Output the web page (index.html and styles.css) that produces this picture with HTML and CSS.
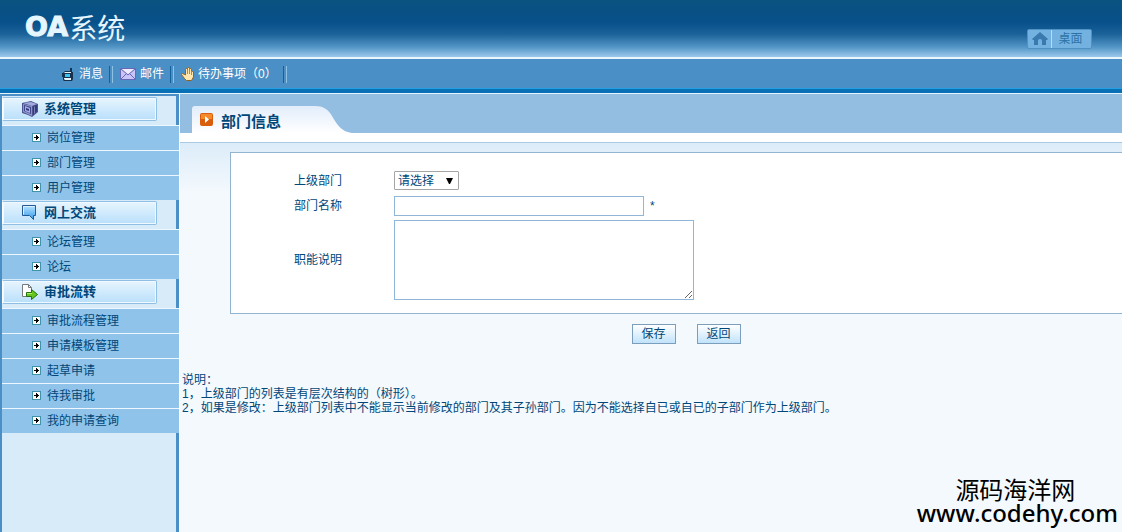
FILE: index.html
```html
<!DOCTYPE html>
<html lang="zh-CN">
<head>
    <meta charset="UTF-8">
    <title>OA系统 - 部门信息</title>
    <link rel="stylesheet" href="styles.css">
</head>

<body>
    <!-- 公用图标 -->
    <svg class="defs" width="0" height="0">
        <symbol id="arrow" viewBox="0 0 9 9">
            <path fill="#3f93ad" d="M0 0h9v9H0z"/>
            <path fill="#fff" d="M1 1h7v7H1z"/>
            <path fill="#000" d="M2 4h5v1H2zM4 2h1v1h1v1H4zM4 5h2v1H5v1H4z"/>
        </symbol>
    </svg>

    <!-- 头部 -->
    <header class="top">
        <h1 class="logo"><b>OA</b>系统</h1>
        <a class="desktop" href="#">
            <svg width="16" height="14" viewBox="0 0 16 14"><path fill="#3979ad" d="M8 0l8 7-1 1h-1v5h-4V9a2 2 0 0 0-4 0v4H2V8H1L0 7z"/></svg>
            <span>桌面</span>
        </a>
    </header>

    <!-- 工具栏 -->
    <nav class="bar">
        <a href="#">
            <svg width="11" height="13" viewBox="0 0 11 13"><path fill="#17324d" d="M8 0h2v4h1v7l-1 2H2l-1-1V9H0V5h1l2-2h5z"/><path fill="#e8f4fb" d="M2 5l1-1h6v8H3L2 11z"/><path fill="#17324d" d="M2 5h7v5H2z"/><path fill="#39c4f4" d="M3 6h5v3H3z"/></svg>
            消息
        </a>
        <a href="#">
            <svg width="16" height="12" viewBox="0 0 16 12"><path fill="#6768b5" d="M1 0h14l1 1v10l-1 1H1l-1-1V1z"/><path fill="#c9c5fb" d="M1 1h14v10H1z"/><path fill="#eeeaff" d="M2 1h12L8 6z"/><path fill="none" stroke="#6768b5" d="M1 1l7 6 7-6M1 11l5-5M15 11l-5-5"/></svg>
            邮件
        </a>
        <a href="#">
            <svg width="13" height="14" viewBox="0 0 13 14"><path fill="#ffe6ae" stroke="#8d6328" d="M4.500 8V2.500l1-1 1 1v-1l1-1 1 1v1l1-1 1 1V5l1-1 1 1v5l-2 3.500h-5l-2-2-3-4 1-1 2 1z"/><path fill="none" stroke="#b98741" d="M6.500 3v4M8.500 3v4M10.500 4v4"/></svg>
            待办事项（0）
        </a>
    </nav>

    <div class="wrap">
        <!-- 左侧菜单 -->
        <aside class="side">
            <h2><span>
                <svg width="16" height="16" viewBox="0 0 16 16"><path fill="#4d538f" d="M0 2l9-2 7 3v8l-6 5-4-2-6-2z"/><path fill="#a2a9dc" d="M1 2l8-1 6 2-5 2z"/><path fill="#8e96cf" d="M1 3l9 2v10l-9-4z"/><path fill="#424887" d="M2 4l7 2v7l-7-3z"/><path fill="#a5aceb" d="M3 5l5 2v5L3 10z"/><path fill="#343b79" d="M4 7l3 1v2L4 9zM11 5l4-1v6l-4 4z"/><path fill="#777eb8" d="M12 6l1-1v7l-1 1z"/></svg>
                系统管理</span></h2>
            <ul>
                <li><a href="#"><svg width="9" height="9"><use href="#arrow"/></svg>岗位管理</a></li>
                <li><a href="#"><svg width="9" height="9"><use href="#arrow"/></svg>部门管理</a></li>
                <li><a href="#"><svg width="9" height="9"><use href="#arrow"/></svg>用户管理</a></li>
            </ul>
            <h2><span>
                <svg width="16" height="16" viewBox="0 0 16 16"><defs><linearGradient id="talk" x2="0" y2="1"><stop stop-color="#b8e3ff"/><stop offset="1" stop-color="#329bea"/></linearGradient></defs><path fill="url(#talk)" stroke="#245994" d="M.500.5h13v10h-2v4l-4-4h-7z"/><path fill="none" stroke="#d8f0ff" d="M1.500 9.500v-8h11"/></svg>
                网上交流</span></h2>
            <ul>
                <li><a href="#"><svg width="9" height="9"><use href="#arrow"/></svg>论坛管理</a></li>
                <li><a href="#"><svg width="9" height="9"><use href="#arrow"/></svg>论坛</a></li>
            </ul>
            <h2><span>
                <svg width="16" height="16" viewBox="0 0 16 16"><path fill="#fff" stroke="#777b80" d="M.5.500h6l3 3v9h-9z"/><path fill="none" stroke="#777b80" d="M6.500.5v3h3"/><path fill="#66c51f" stroke="#23720d" d="M4.500 8.500h5v-3l6 5-6 5v-3h-5z"/><path stroke="#b1ed66" d="M5 9.500h5"/></svg>
                审批流转</span></h2>
            <ul>
                <li><a href="#"><svg width="9" height="9"><use href="#arrow"/></svg>审批流程管理</a></li>
                <li><a href="#"><svg width="9" height="9"><use href="#arrow"/></svg>申请模板管理</a></li>
                <li><a href="#"><svg width="9" height="9"><use href="#arrow"/></svg>起草申请</a></li>
                <li><a href="#"><svg width="9" height="9"><use href="#arrow"/></svg>待我审批</a></li>
                <li><a href="#"><svg width="9" height="9"><use href="#arrow"/></svg>我的申请查询</a></li>
            </ul>
        </aside>

        <!-- 右侧内容 -->
        <main class="main">
            <div class="title">
                <h2>
                    <svg width="13" height="13" viewBox="0 0 13 13"><rect width="13" height="13" rx="2" fill="#d85d0c"/><path fill="#f58a2b" d="M1 1h11v5H1z"/><path fill="#fff" d="M5 3l4 3.500L5 10z"/></svg>
                    <span>部门信息</span>
                </h2>
                <svg class="curve" width="40" height="27" viewBox="0 0 40 27"><defs><linearGradient id="tab" x2="0" y2="1"><stop stop-color="#e2edfb"/><stop offset="1" stop-color="#fff"/></linearGradient></defs><path fill="url(#tab)" d="M0 0h3c8 0 13 3 17 10 5 9 10 16 20 17H0z"/></svg>
            </div>

            <form class="content">
                <div class="panel">
                    <div class="row">
                        <label for="parent">上级部门</label>
                        <select id="parent"><option>请选择</option></select>
                    </div>
                    <div class="row">
                        <label for="name">部门名称</label>
                        <input id="name" type="text"><span class="must">*</span>
                    </div>
                    <div class="row row-area">
                        <label for="desc">职能说明</label>
                        <textarea id="desc"></textarea>
                    </div>
                </div>
                <div class="btns">
                    <button type="submit">保存</button>
                    <button type="button">返回</button>
                </div>
            </form>

            <div class="notes">
                <p>说明：</p>
                <p>1，上级部门的列表是有层次结构的（树形）。</p>
                <p>2，如果是修改：上级部门列表中不能显示当前修改的部门及其子孙部门。因为不能选择自已或自已的子部门作为上级部门。</p>
            </div>
        </main>
    </div>

    <!-- 水印 -->
    <div class="mark">
        <p>源码海洋网</p>
        <p class="url">www.codehy.com</p>
    </div>
</body>
</html>
```
FILE: styles.css
```css
* {
    box-sizing: border-box;
}

body,
ul,
h1,
h2,
p {
    margin: 0;
    padding: 0;
}

body {
    display: flex;
    flex-direction: column;
    min-height: 100vh;
    font: 12px/14px "Liberation Sans", "Noto Sans CJK SC", sans-serif;
    color: #004779;
    background: #f4f9fd;
}

a {
    color: inherit;
    text-decoration: none;
}

svg {
    flex: none;
}

.defs {
    position: absolute;
}

/* 头部 */
.top {
    display: flex;
    justify-content: space-between;
    align-items: flex-start;
    height: 59px;
    padding: 0 30px 0 25px;
    border-bottom: 2px solid #e9f6fc;
    background: linear-gradient(#0a527f 0, #07508a 22px, #1b6299 34px, #5295c6 47px, #9bc8eb 57px);
}

.logo {
    display: flex;
    align-items: center;
    gap: 1px;
    height: 54px;
    font: 400 28px/54px "Noto Sans CJK SC", sans-serif;
    color: #e6f6ff;
}

.logo b {
    font: 900 27px/54px "DejaVu Sans", sans-serif;
    -webkit-text-stroke: 1px #e6f6ff;
}

.desktop {
    display: flex;
    align-items: center;
    width: 65px;
    height: 20px;
    margin-top: 29px;
    border: 1px solid #4f91c3;
    border-radius: 2px;
    background: #73b2e0;
    color: #2d72a7;
}

.desktop svg {
    margin: 0 3px 0 4px;
}

.desktop span {
    flex: 1;
    padding: 1px 2px 0 0;
    border-left: 1px solid #b5dcf5;
    line-height: 17px;
    text-align: center;
}

/* 工具栏 */
.bar {
    display: flex;
    align-items: center;
    height: 35px;
    padding: 0 0 4px 54px;
    border-bottom: 1px solid #e5f5ff;
    background: linear-gradient(#4a8fc5 29px, #21a0e4 29px, #21a0e4 30px, #0a70b6 30px);
    color: #fff;
}

.bar a {
    display: flex;
    align-items: center;
    gap: 6px;
    height: 17px;
    padding: 0 9px 0 8px;
    border-right: 1px solid #8fc1e5;
    box-shadow: inset -2px 0 #4a8fc5, inset -3px 0 #15619b;
}

.bar a + a {
    gap: 4px;
    padding-left: 7px;
}

.wrap {
    flex: 1;
    display: flex;
}

/* 左侧菜单 */
.side {
    flex: none;
    width: 179px;
    padding-left: 2px;
    border-top: 2px solid #4a8fc5;
    background: linear-gradient(90deg, #4a8fc5 2px, #d8ebf9 2px, #d8ebf9 176px, #4a8fc5 176px);
}

.side h2 {
    height: 29px;
    padding: 1px 22px 4px 0;
    font-size: 13px;
}

.side h2 span {
    display: flex;
    align-items: center;
    gap: 6px;
    height: 24px;
    padding-left: 19px;
    border: 1px solid #8fbfe4;
    border-left-color: #fff;
    border-radius: 2px;
    box-shadow: inset 0 0 0 1px #f0f9ff;
    background: linear-gradient(#e7f5ff, #b9dffa);
}

.side ul {
    list-style: none;
}

.side li a {
    display: flex;
    align-items: center;
    gap: 6px;
    height: 25px;
    padding-left: 30px;
    border-top: 1px solid #eef7ff;
    background: #8fc3e9;
}

.side li svg {
    margin-bottom: 2px;
}

/* 右侧内容 */
.main {
    flex: 1;
    min-width: 0;
    border-left: 1px solid #fff;
}

.title {
    display: flex;
    align-items: flex-end;
    height: 49px;
    padding: 0 0 9px 12px;
    border-bottom: 1px solid #aac9e2;
    background: linear-gradient(#93bee2 39px, #fff 39px);
}

.title h2 {
    display: flex;
    align-items: center;
    gap: 8px;
    width: 120px;
    height: 27px;
    padding-left: 8px;
    border-radius: 3px 0 0 0;
    background: linear-gradient(#e2edfb, #fff);
    font-size: 15px;
}

.title h2 span {
    padding-top: 4px;
}

.content {
    padding: 9px 0 0 50px;
    background: linear-gradient(#dcecf9, #f4f9fd 50px);
}

.panel {
    padding: 15px 0 11px 63px;
    border: 1px solid #91b4d0;
    border-right: 0;
    background: #fff;
}

.row {
    display: flex;
    align-items: center;
    height: 25px;
}

.row-area {
    height: 84px;
}

.row label {
    width: 100px;
}

.row select,
.row input,
.row textarea {
    margin: 0;
    border: 1px solid #91b7d8;
    border-radius: 0;
    background-color: #fff;
    font: inherit;
    color: inherit;
}

.row select {
    width: 65px;
    height: 19px;
    padding: 0 3px;
    border-color: #a5a5a5;
    border-radius: 1px;
    appearance: none;
    background: #fff url("data:image/svg+xml,%3Csvg xmlns='http://www.w3.org/2000/svg' width='7' height='6'%3E%3Cpath d='M0 0h7L4 6H3z'/%3E%3C/svg%3E") no-repeat right 5px center;
}

.row input {
    width: 250px;
    height: 20px;
}

.row textarea {
    width: 300px;
    height: 80px;
}

.must {
    margin-left: 6px;
}

.btns {
    display: flex;
    justify-content: center;
    gap: 21px;
    padding: 10px 0 0 20px;
}

.btns button {
    width: 44px;
    height: 20px;
    padding: 0;
    border: 1px solid #7b9ebd;
    background: linear-gradient(#fff, #c1e3fb);
    font: inherit;
    color: inherit;
}

.notes {
    padding: 29px 2px 0;
}

/* 水印 */
.mark {
    position: absolute;
    right: 4px;
    bottom: 7px;
    font: 400 24px/24px "Noto Sans CJK SC", sans-serif;
    color: #000;
    text-align: center;
}

.mark p {
    padding-right: 4px;
}

.mark .url {
    padding: 0;
    font: 500 24px/24px "Noto Sans", sans-serif;
}
```
